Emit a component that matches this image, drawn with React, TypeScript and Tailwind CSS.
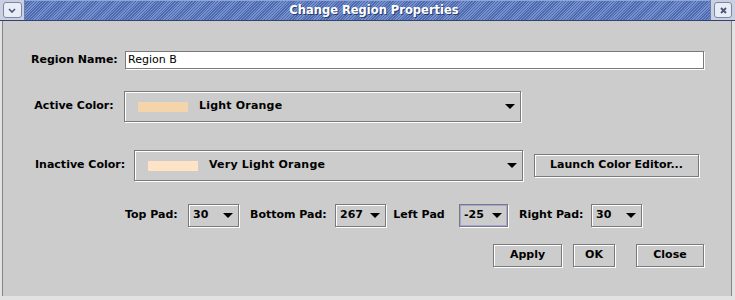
import React from "react";

// Metal-look "Change Region Properties" dialog

const etched = "border border-[#7a7a7a] shadow-[inset_1px_1px_0_#ffffff,1px_1px_0_#ffffff]";

function Arrow() {
  return (
    <svg width="10" height="5" viewBox="0 0 10 5" className="shrink-0">
      <path d="M0 0H10L5 5Z" fill="#000000" />
    </svg>
  );
}

function ColorCombo({ swatch, label, width }: { swatch: string; label: string; width: string }) {
  return (
    <div className={`${etched} ${width} h-[31px] flex items-center pl-[13px] pr-[5px] bg-[#cccccc]`}>
      <div className="w-[50px] h-[10px] shrink-0" style={{ backgroundColor: swatch }} />
      <span className="ml-[11px] font-bold whitespace-nowrap tracking-[0.2px]">{label}</span>
      <div className="flex-1" />
      <Arrow />
    </div>
  );
}

function PadCombo({ value, width, focused }: { value: string; width: string; focused?: boolean }) {
  return (
    <div
      className={`border border-[#7a7a7a] ${
        focused
          ? "shadow-[inset_0_0_0_1px_#a4a4dc,1px_1px_0_#ffffff]"
          : "shadow-[inset_1px_1px_0_#ffffff,1px_1px_0_#ffffff]"
      } ${width} h-[23px] flex items-center pl-[4px] pr-[5px]`}
    >
      <span className="font-bold">{value}</span>
      <div className="flex-1" />
      <Arrow />
    </div>
  );
}

function Button({ label, width, className = "" }: { label: string; width: string; className?: string }) {
  return (
    <div className={`${etched} ${width} h-[23px] flex items-center justify-center font-bold whitespace-nowrap ${className}`}>
      {label}
    </div>
  );
}

export default function App() {
  return (
    <div className="w-[735px] h-[300px] flex flex-col bg-[#e2e2e2] text-[11px] text-black font-['DejaVu_Sans',sans-serif] overflow-hidden">
      {/* Title bar */}
      <div className="flex h-[21px] shrink-0 border-b border-[#2f4270]">
        <div className="w-[25px] bg-[#c8d0e2] flex items-center justify-center border-r border-[#6d7fa8]">
          <div className="w-[19px] h-[16px] rounded-[3px] border border-[#7c86a3] bg-[#e9edf5] flex items-center justify-center">
            <svg width="8" height="5" viewBox="0 0 8 5">
              <path d="M1 1L4 4L7 1" stroke="#4a5578" strokeWidth="1.6" fill="none" />
            </svg>
          </div>
        </div>
        <div className="flex-1 flex items-center justify-center pl-[13px] border-t border-[#8fa5d6] bg-[repeating-linear-gradient(135deg,#4d6bae_0px,#4d6bae_1px,#7690cd_1px,#7690cd_2px)]">
          <span className="text-white font-bold text-[11.5px] [text-shadow:1px_1px_0_#2b3d6b]">
            Change Region Properties
          </span>
        </div>
        <div className="w-[25px] bg-[#c8d0e2] flex items-center justify-center border-l border-[#6d7fa8]">
          <div className="w-[18px] h-[16px] rounded-[3px] border border-[#7c86a3] bg-[#e9edf5] flex items-center justify-center">
            <svg width="7" height="7" viewBox="0 0 7 7">
              <path d="M1 1L6 6M6 1L1 6" stroke="#4a5578" strokeWidth="1.8" fill="none" />
            </svg>
          </div>
        </div>
      </div>

      {/* Frame + body */}
      <div className="flex flex-1 pl-[2px] pr-[3px] pb-[4px]">
        <div className="flex-1 flex flex-col bg-[#cccccc] border-l border-r border-[#858585]">
          {/* Region name */}
          <div className="flex items-center mt-[30px] pl-[28px]">
            <div className="w-[86px] text-center font-bold whitespace-nowrap">Region Name:</div>
            <div className="ml-[8px] w-[579px] h-[18px] bg-white border border-[#7a7a7a] shadow-[1px_1px_0_#ffffff] flex items-center pl-[2px]">
              Region B
            </div>
          </div>

          {/* Active color */}
          <div className="flex items-center mt-[22px] pl-[31px]">
            <div className="w-[80px] text-center font-bold whitespace-nowrap">Active Color:</div>
            <div className="ml-[10px]">
              <ColorCombo swatch="#f4d4aa" label="Light Orange" width="w-[397px]" />
            </div>
          </div>

          {/* Inactive color */}
          <div className="flex items-center mt-[28px] pl-[32px]">
            <div className="w-[89px] text-center font-bold whitespace-nowrap">Inactive Color:</div>
            <div className="ml-[10px]">
              <ColorCombo swatch="#fee3c6" label="Very Light Orange" width="w-[389px]" />
            </div>
            <Button label="Launch Color Editor..." width="w-[165px]" className="ml-[11px]" />
          </div>

          {/* Pads */}
          <div className="flex items-center mt-[23px] pl-[122px]">
            <div className="w-[52px] text-center font-bold whitespace-nowrap">Top Pad:</div>
            <div className="ml-[11px]">
              <PadCombo value="30" width="w-[51px]" />
            </div>
            <div className="ml-[11px] w-[75px] text-center font-bold whitespace-nowrap">Bottom Pad:</div>
            <div className="ml-[10px]">
              <PadCombo value="267" width="w-[51px]" />
            </div>
            <div className="ml-[5px] w-[56px] text-center font-bold whitespace-nowrap">Left Pad</div>
            <div className="ml-[12px]">
              <PadCombo value="-25" width="w-[49px]" focused />
            </div>
            <div className="ml-[11px] w-[62px] text-center font-bold whitespace-nowrap">Right Pad:</div>
            <div className="ml-[10px]">
              <PadCombo value="30" width="w-[51px]" />
            </div>
          </div>

          {/* Buttons */}
          <div className="flex items-center mt-[17px] pl-[490px]">
            <Button label="Apply" width="w-[69px]" />
            <Button label="OK" width="w-[42px]" className="ml-[11px]" />
            <Button label="Close" width="w-[68px]" className="ml-[21px]" />
          </div>
        </div>
      </div>
    </div>
  );
}
